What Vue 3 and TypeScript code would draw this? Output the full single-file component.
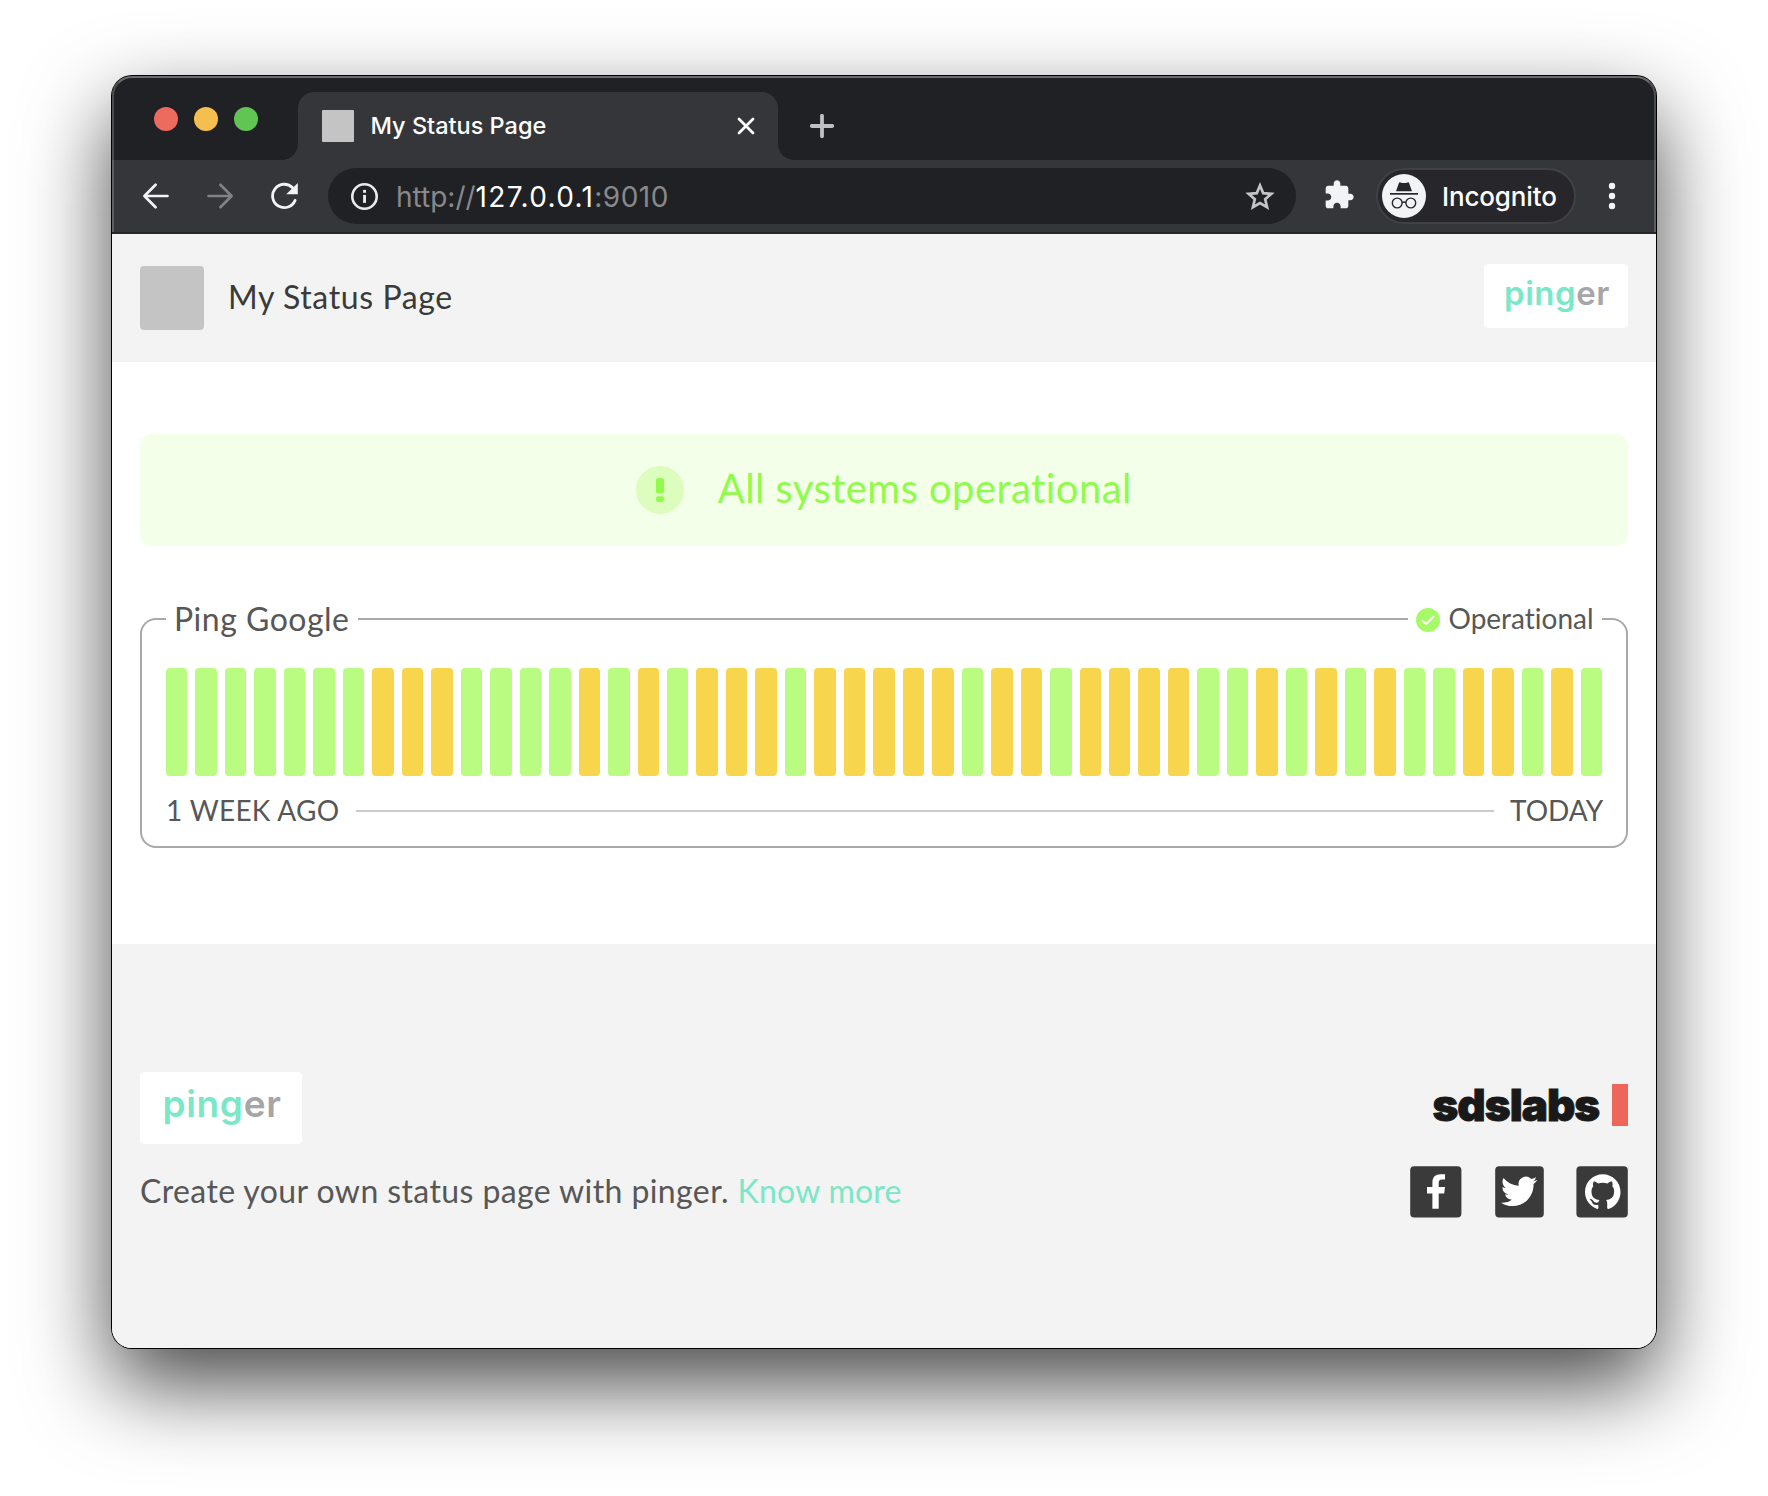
<script setup lang="ts">
type Status = 'up' | 'slow'

const pattern = 'GGGGGGGYYYGGGGYGYGYYYGYYYYYGYYGYYYYGGYGYGYGGYYGYG'
const checks: Status[] = [...pattern].map((c) => (c === 'G' ? 'up' : 'slow'))
</script>

<template>
  <div class="desktop">
    <div class="window">
      <div class="chrome">
        <div class="tabstrip">
          <div class="lights">
            <i class="light red"></i>
            <i class="light amber"></i>
            <i class="light green"></i>
          </div>
          <div class="tab">
            <span class="favicon"></span>
            <span class="tab-title">My Status Page</span>
            <svg class="tab-close" width="20" height="20" viewBox="0 0 20 20">
              <path d="M3 3L17 17M17 3L3 17" stroke="#fff" stroke-width="2.8" stroke-linecap="round" />
            </svg>
          </div>
          <svg class="new-tab" width="24" height="24" viewBox="0 0 24 24">
            <path d="M12 1.8V22.2M1.8 12H22.2" stroke="#bdc1c6" stroke-width="3.8" stroke-linecap="round" />
          </svg>
        </div>
        <div class="toolbar">
          <svg class="nav back" width="28" height="28" viewBox="0 0 28 28" fill="none" stroke="#f1f3f4" stroke-width="2.7" stroke-linecap="round" stroke-linejoin="round">
            <path d="M25.5 14H2.6M13.6 2.8L2.4 14L13.6 25.2" />
          </svg>
          <svg class="nav forward" width="28" height="28" viewBox="0 0 28 28" fill="none" stroke="#818286" stroke-width="2.7" stroke-linecap="round" stroke-linejoin="round">
            <path d="M2.5 14H25.4M14.4 2.8L25.6 14L14.4 25.2" />
          </svg>
          <svg class="nav reload" width="28" height="28" viewBox="0 0 28 28" fill="none">
            <path d="M22.6 5.7A11.7 11.7 0 1 0 25.1 18.4" stroke="#f1f3f4" stroke-width="2.8" stroke-linecap="round" />
            <path d="M27.8 1V12.3H16.2Z" fill="#f1f3f4" />
          </svg>
          <div class="omnibox">
            <svg class="info" width="28" height="28" viewBox="0 0 28 28">
              <circle cx="14.5" cy="14.5" r="12.2" fill="none" stroke="#e8eaed" stroke-width="2.6" />
              <rect x="13.1" y="12.9" width="2.9" height="8" fill="#e8eaed" />
              <rect x="13.1" y="7.9" width="2.9" height="2.9" fill="#e8eaed" />
            </svg>
            <span class="url"><span class="scheme">http://</span><span class="host">127.0.0.1</span><span class="port">:9010</span></span>
            <svg class="star" width="30" height="29" viewBox="0 0 30 29" fill="none">
              <path d="M15 3.5L18.2 11.1L26.4 11.8L20.2 17.2L22.1 25.2L15 21L7.9 25.2L9.8 17.2L3.6 11.8L11.8 11.1Z" stroke="#c3c4c6" stroke-width="2.7" />
            </svg>
          </div>
          <svg class="puzzle" width="32" height="32" viewBox="0 0 24 24">
            <path fill="#f1f3f4" d="M20.5 11H19V7c0-1.1-.9-2-2-2h-4V3.5C13 2.12 11.88 1 10.5 1S8 2.12 8 3.5V5H4c-1.1 0-1.99.9-1.99 2v3.8H3.5c1.49 0 2.7 1.21 2.7 2.7s-1.21 2.7-2.7 2.7H2V20c0 1.1.9 2 2 2h3.8v-1.5c0-1.49 1.21-2.7 2.7-2.7 1.49 0 2.7 1.21 2.7 2.7V22H17c1.1 0 2-.9 2-2v-4h1.5c1.38 0 2.5-1.12 2.5-2.5S21.88 11 20.5 11z" />
          </svg>
          <div class="incognito">
            <svg width="44" height="44" viewBox="0 0 44 44">
              <circle cx="22" cy="22" r="22" fill="#f1f3f4" />
              <path d="M14 17.2L16.8 9.2Q17.2 8 18.5 8.4Q22 9.8 25.5 8.4Q26.8 8 27.2 9.2L30 17.2Z" fill="#27262b" />
              <rect x="8" y="19" width="28" height="1.7" fill="#27262b" />
              <g fill="none" stroke="#27262b" stroke-width="1.4">
                <circle cx="15.2" cy="29" r="4.9" />
                <circle cx="28.8" cy="29" r="4.9" />
                <path d="M20.1 28.6Q22 27.4 23.9 28.6" />
              </g>
            </svg>
            <span class="incognito-label">Incognito</span>
          </div>
          <svg class="menu" width="8" height="28" viewBox="0 0 8 28" fill="#f1f3f4">
            <circle cx="4" cy="4" r="3.2" />
            <circle cx="4" cy="14" r="3.2" />
            <circle cx="4" cy="24" r="3.2" />
          </svg>
        </div>
      </div>

      <header class="page-header">
        <span class="site-logo"></span>
        <h1 class="site-title">My Status Page</h1>
        <div class="pinger small"><span class="ping">ping</span><span class="er">er</span></div>
      </header>

      <main class="content">
        <div class="banner">
          <svg width="48" height="48" viewBox="0 0 48 48">
            <circle cx="24" cy="24" r="24" fill="#dcfdbe" />
            <rect x="20" y="12" width="8" height="15.5" rx="2.5" fill="#90fb4b" />
            <rect x="20" y="30.3" width="8" height="5.7" rx="2.5" fill="#90fb4b" />
          </svg>
          <span class="banner-text">All systems operational</span>
        </div>

        <section class="card">
          <div class="card-top">
            <span class="edge left"></span>
            <h2 class="check-name">Ping Google</h2>
            <span class="rule"></span>
            <div class="check-status">
              <svg width="24" height="24" viewBox="0 0 24 24">
                <circle cx="12" cy="12" r="12" fill="#a5fb66" />
                <path d="M6.7 12.9L10.2 16.1L17.4 8.7" fill="none" stroke="#fff" stroke-width="2" stroke-linecap="round" stroke-linejoin="round" />
              </svg>
              <span class="status-label">Operational</span>
            </div>
            <span class="edge right"></span>
          </div>
          <div class="card-body">
            <div class="bars">
              <span v-for="(check, i) in checks" :key="i" class="bar" :class="check"></span>
            </div>
            <div class="range">
              <span class="range-start">1 WEEK AGO</span>
              <span class="range-line"></span>
              <span class="range-end">TODAY</span>
            </div>
          </div>
        </section>
      </main>

      <footer class="footer">
        <div class="about">
          <div class="pinger large"><span class="ping">ping</span><span class="er">er</span></div>
          <p class="pitch"><span class="pitch-text">Create your own status page with pinger. </span><a class="more">Know more</a></p>
        </div>
        <div class="org">
          <div class="sdslabs"><span class="sds-text">sdslabs</span><i class="sds-bar"></i></div>
          <div class="social">
            <svg width="52" height="52" viewBox="0 0 52 52">
              <rect x="0.2" y="0.2" width="51.2" height="51.2" rx="4" fill="#3a3a3a" />
              <path fill="#fff" d="M22.4 42.7V27.5H17V21H22.4V16.5C22.4 11 25.5 8.2 30.5 8.2H35V13.6H32C29.5 13.6 28.7 14.8 28.7 17V21H35L34.2 27.5H28.7V42.7Z" />
            </svg>
            <svg width="49" height="52" viewBox="0 0 49 52">
              <rect x="0.2" y="0.2" width="48.6" height="51.2" rx="4" fill="#3a3a3a" />
              <path fill="#fff" transform="translate(6 7.2) scale(1.51)" d="M23.953 4.57a10 10 0 01-2.825.775 4.958 4.958 0 002.163-2.723c-.951.555-2.005.959-3.127 1.184a4.92 4.92 0 00-8.384 4.482C7.69 8.095 4.067 6.13 1.64 3.162a4.822 4.822 0 00-.666 2.475c0 1.71.87 3.213 2.188 4.096a4.904 4.904 0 01-2.228-.616v.06a4.923 4.923 0 003.946 4.827 4.996 4.996 0 01-2.212.085 4.936 4.936 0 004.604 3.417 9.867 9.867 0 01-6.102 2.105c-.39 0-.779-.023-1.17-.067a13.995 13.995 0 007.557 2.209c9.053 0 13.998-7.496 13.998-13.985 0-.21 0-.42-.015-.63A9.935 9.935 0 0024 4.59z" />
            </svg>
            <svg width="52" height="52" viewBox="0 0 52 52">
              <rect x="0.4" y="0.2" width="51.4" height="51.2" rx="4" fill="#3a3a3a" />
              <path fill="#fff" transform="translate(9 8.3) scale(2.22)" d="M8 0C3.58 0 0 3.58 0 8c0 3.54 2.29 6.53 5.47 7.59.4.07.55-.17.55-.38 0-.19-.01-.82-.01-1.49-2.01.37-2.53-.49-2.69-.94-.09-.23-.48-.94-.82-1.13-.28-.15-.68-.52-.01-.53.63-.01 1.08.58 1.23.82.72 1.21 1.87.87 2.33.66.07-.52.28-.87.51-1.07-1.78-.2-3.64-.89-3.64-3.95 0-.87.31-1.59.82-2.15-.08-.2-.36-1.02.08-2.12 0 0 .67-.21 2.2.82.64-.18 1.32-.27 2-.27s1.36.09 2 .27c1.53-1.04 2.2-.82 2.2-.82.44 1.1.16 1.92.08 2.12.51.56.82 1.27.82 2.15 0 3.07-1.87 3.75-3.65 3.95.29.25.54.73.54 1.48 0 1.07-.01 1.93-.01 2.2 0 .21.15.46.55.38A8.01 8.01 0 0016 8c0-4.42-3.58-8-8-8z" />
            </svg>
          </div>
        </div>
      </footer>
    </div>
  </div>
</template>

<style>
html,
body {
  margin: 0;
  background: #fff;
}
</style>

<style scoped>
* {
  box-sizing: border-box;
}

.desktop {
  width: 1768px;
  height: 1496px;
  padding: 76px 112px 148px;
  overflow: hidden;
  background: #fff;
  font-family: Lato, sans-serif;
  font-variant-ligatures: none;
}

svg {
  display: block;
  flex: none;
}

.window {
  display: flex;
  flex-direction: column;
  height: 1272px;
  border-radius: 20px;
  background: #fff;
  box-shadow: 0 0 0 1px #000, 0 36px 86px rgba(0, 0, 0, 0.73);
}

/* Browser chrome */
.chrome {
  position: relative;
  height: 158px;
  border-radius: 20px 20px 0 0;
  background: #35363a;
  border-bottom: 2px solid #28282b;
  font-family: Inter, sans-serif;
  overflow: hidden;
}

.chrome::after {
  content: '';
  position: absolute;
  inset: 0 0 -2px;
  border: 2px solid rgba(255, 255, 255, 0.2);
  border-top-color: rgba(255, 255, 255, 0.34);
  border-bottom: 0;
  border-radius: 20px 20px 0 0;
}

.tabstrip {
  display: flex;
  height: 84px;
  background: #202124;
}

.lights {
  display: flex;
  gap: 16px;
  width: 186px;
  padding: 31px 0 0 42px;
}

.light {
  width: 24px;
  height: 24px;
  border-radius: 50%;
}

.red {
  background: #ed6a5e;
}

.amber {
  background: #f5bf4f;
}

.green {
  background: #61c554;
}

.tab {
  position: relative;
  display: flex;
  align-items: center;
  width: 480px;
  height: 68px;
  margin-top: 16px;
  padding: 0 22px 0 24px;
  border-radius: 16px 16px 0 0;
  background: #35363a;
}

.tab::before,
.tab::after {
  content: '';
  position: absolute;
  bottom: 0;
  width: 16px;
  height: 16px;
}

.tab::before {
  left: -16px;
  background: radial-gradient(circle at 0 0, transparent 15.6px, #35363a 16.2px);
}

.tab::after {
  right: -16px;
  background: radial-gradient(circle at 100% 0, transparent 15.6px, #35363a 16.2px);
}

.favicon {
  width: 32px;
  height: 32px;
  border-radius: 1px;
  background: #c4c4c4;
}

.tab-title {
  margin-left: 16.5px;
  font-size: 23.5px;
  line-height: 30px;
  font-weight: 450;
  letter-spacing: 0;
  color: #fff;
  white-space: nowrap;
}

.tab-close {
  margin-left: auto;
}

.new-tab {
  margin: 38px 0 0 32px;
}

.toolbar {
  display: flex;
  align-items: center;
  height: 72px;
}

.back {
  margin-left: 30px;
}

.forward {
  margin-left: 36px;
}

.reload {
  margin-left: 36px;
}

.omnibox {
  display: flex;
  align-items: center;
  width: 968px;
  height: 56px;
  margin-left: 30px;
  padding: 0 21px 0 22px;
  border-radius: 28px;
  background: #202124;
}

.url {
  margin: 1px 0 0 18px;
  font-size: 28px;
  line-height: 36px;
  white-space: nowrap;
  color: #88898b;
}

.host {
  letter-spacing: 1.35px;
  color: #fff;
}

.port {
  letter-spacing: 0.5px;
}

.star {
  margin-left: auto;
}

.puzzle {
  margin: -2px 0 0 27px;
}

.incognito {
  display: flex;
  align-items: center;
  width: 200px;
  height: 56px;
  margin-left: 21px;
  padding-left: 4px;
  border: 2px solid #404145;
  border-radius: 28px;
  background: #27262b;
}

.incognito-label {
  margin: 2px 0 0 16px;
  font-size: 26px;
  line-height: 34px;
  font-weight: 450;
  letter-spacing: -0.15px;
  color: #fff;
}

.menu {
  margin-left: 32px;
}

/* Page header */
.page-header {
  display: flex;
  align-items: center;
  height: 128px;
  padding: 0 28px;
  background: #f3f3f3;
}

.site-logo {
  width: 64px;
  height: 64px;
  border-radius: 4px;
  background: #c4c4c4;
}

.site-title {
  margin: -2px 0 0 24px;
  font-size: 32px;
  line-height: 44px;
  font-weight: 400;
  letter-spacing: 0.6px;
  color: #3a3a3a;
}

.pinger {
  display: flex;
  align-items: center;
  background: #fff;
  border-radius: 4px;
  font-family: Inter, sans-serif;
  font-weight: 600;
}

.ping {
  color: #7ae7c7;
}

.er {
  color: #a6a6a6;
}

.small {
  width: 144px;
  height: 64px;
  margin: -4px 0 0 auto;
  padding: 0 0 7px 20px;
  font-size: 33px;
  letter-spacing: 0.55px;
}

.large {
  width: 162px;
  height: 72px;
  padding: 0 0 9px 22.5px;
  font-size: 37px;
  letter-spacing: 0.65px;
}

/* Status content */
.content {
  height: 582px;
  padding: 72px 28px 0;
}

.banner {
  display: flex;
  align-items: center;
  justify-content: center;
  height: 112px;
  border-radius: 12px;
  background: #f4ffe9;
}

.banner-text {
  margin: -4px 0 0 33.5px;
  font-size: 40px;
  line-height: 56px;
  letter-spacing: 0.4px;
  color: #90fb4b;
}

.card {
  margin-top: 54px;
}

.card-top {
  display: flex;
  align-items: flex-start;
  height: 40px;
}

.edge {
  width: 26px;
  height: 22px;
  margin-top: 18px;
  border-top: 2px solid #a9a9a9;
}

.edge.left {
  border-left: 2px solid #a9a9a9;
  border-top-left-radius: 16px;
}

.edge.right {
  border-right: 2px solid #a9a9a9;
  border-top-right-radius: 16px;
}

.check-name {
  width: 192px;
  margin: -1px 0 0;
  padding-left: 8px;
  font-size: 32px;
  line-height: 40px;
  font-weight: 400;
  letter-spacing: 0.5px;
  color: #575757;
  white-space: nowrap;
}

.rule {
  flex: 1;
  height: 2px;
  margin-top: 18px;
  background: #a9a9a9;
}

.check-status {
  display: flex;
  align-items: center;
  width: 194px;
  height: 40px;
  padding-left: 8px;
}

.status-label {
  margin: -4px 0 0 8.5px;
  font-size: 28px;
  line-height: 36px;
  color: #575757;
}

.card-body {
  height: 208px;
  padding: 28px 24px 0;
  border: 2px solid #a9a9a9;
  border-top: 0;
  border-radius: 0 0 16px 16px;
}

.bars {
  display: grid;
  grid-template-columns: repeat(49, 1fr);
  gap: 8px;
  height: 108px;
}

.bar {
  border-radius: 4px;
}

.up {
  background: #b9fc81;
}

.slow {
  background: #f7d54c;
}

.range {
  display: flex;
  align-items: center;
  height: 36px;
  margin-top: 17px;
  font-size: 28px;
  line-height: 36px;
  color: #575757;
  white-space: nowrap;
}

.range-start {
  width: 190px;
  margin-top: -3px;
  letter-spacing: 0.3px;
}

.range-line {
  flex: 1;
  height: 2px;
  background: #ccc;
}

.range-end {
  width: 108px;
  margin-top: -3px;
  padding-left: 16px;
}

/* Footer */
.footer {
  display: flex;
  justify-content: space-between;
  height: 404px;
  padding: 128px 28px 0;
  border-radius: 0 0 20px 20px;
  background: #f3f3f3;
}

.pitch {
  margin: 25px 0 0;
  font-size: 32px;
  line-height: 44px;
  color: #575757;
  white-space: nowrap;
}

.pitch-text {
  letter-spacing: 0.4px;
}

.more {
  letter-spacing: 0.25px;
  color: #7ae7c7;
}

.org {
  display: flex;
  flex-direction: column;
  align-items: flex-end;
  padding-top: 11px;
}

.sdslabs {
  display: flex;
  align-items: center;
  height: 43px;
}

.sds-text {
  width: 179px;
  margin-top: 2px;
  font-family: Inter, sans-serif;
  font-size: 44px;
  line-height: 43px;
  font-weight: 900;
  letter-spacing: -1px;
  -webkit-text-stroke: 0.9px #191919;
  color: #191919;
  white-space: nowrap;
}

.sds-bar {
  width: 16.5px;
  height: 42px;
  background: #ee6559;
}

.social {
  display: flex;
  justify-content: space-between;
  width: 218px;
  margin-top: 40px;
}
</style>
